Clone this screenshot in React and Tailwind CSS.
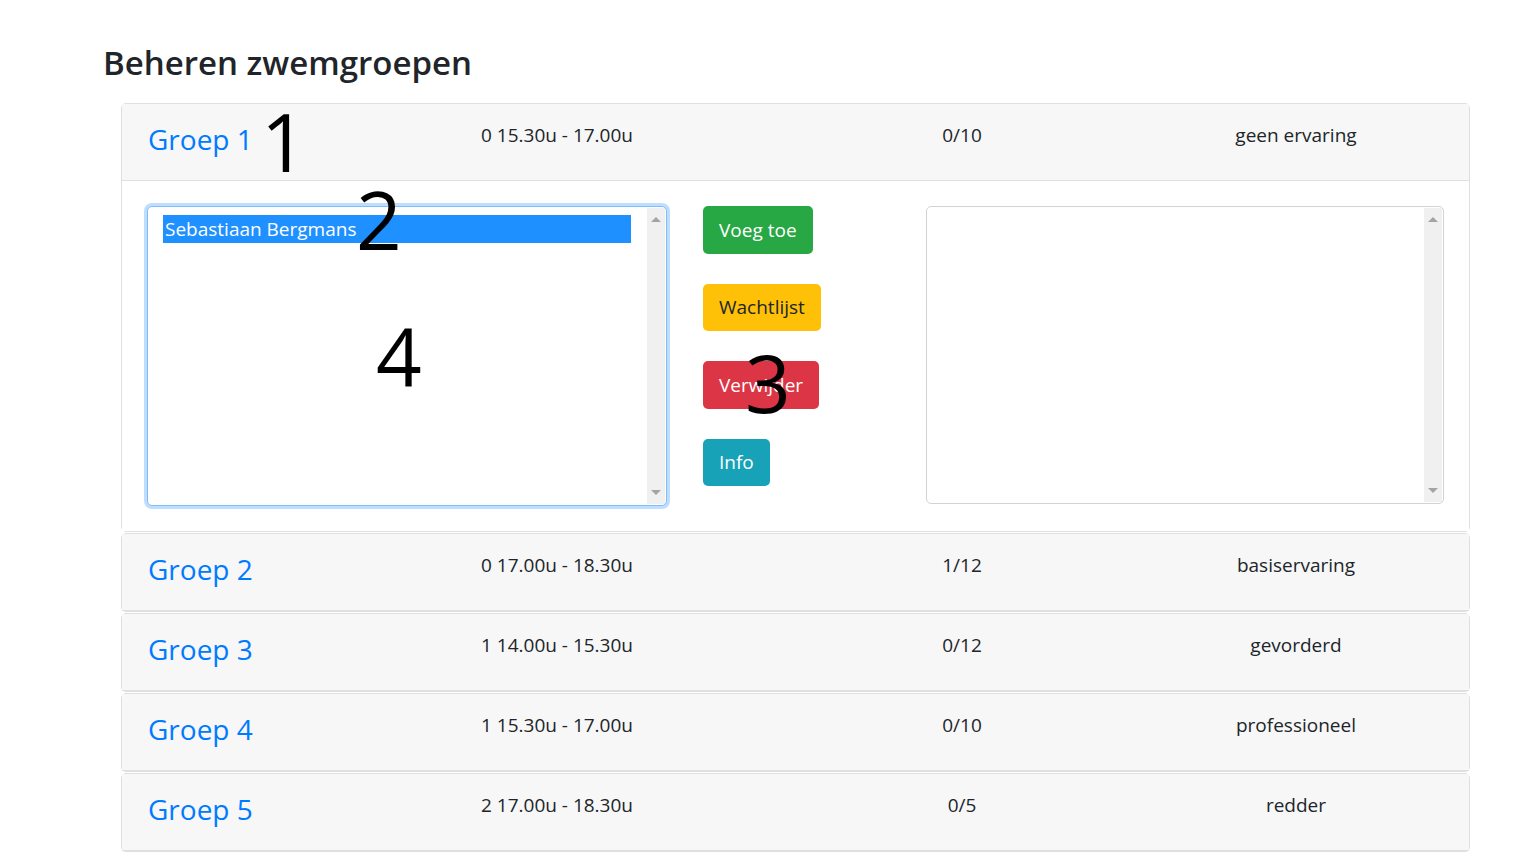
import React from "react";

const font = { fontFamily: '"Open Sans", "Noto Sans", "Liberation Sans", sans-serif' };

function Scrollbar() {
  return (
    <div className="flex w-[18px] shrink-0 flex-col items-center justify-between bg-[#f0f0f0] py-[9px]">
      <div className="h-0 w-0 border-x-[5px] border-b-[5px] border-x-transparent border-b-[#a3a3a3]" />
      <div className="h-0 w-0 border-x-[5px] border-t-[5px] border-x-transparent border-t-[#a3a3a3]" />
    </div>
  );
}

function Header({ name, time, count, level }) {
  return (
    <div className="flex h-[77px] items-start border-b border-[#dfdfdf] bg-[#f7f7f7] pl-[26px] pr-[6px] pt-[16px]">
      <div className="w-[333px] shrink-0 pt-[1px] text-[28px] leading-[36px] text-[#007bff]">{name}</div>
      <div className="w-[314px] shrink-0 text-[19px] leading-[30px] text-[#212529]">{time}</div>
      <div className="w-[334px] shrink-0 text-center text-[19px] leading-[30px] text-[#212529]">{count}</div>
      <div className="w-[334px] shrink-0 text-center text-[19px] leading-[30px] text-[#212529]">{level}</div>
    </div>
  );
}

const rows = [
  ["Groep 2", "0 17.00u - 18.30u", "1/12", "basiservaring"],
  ["Groep 3", "1 14.00u - 15.30u", "0/12", "gevorderd"],
  ["Groep 4", "1 15.30u - 17.00u", "0/10", "professioneel"],
  ["Groep 5", "2 17.00u - 18.30u", "0/5", "redder"],
];

export default function App() {
  return (
    <div className="relative min-h-[864px] bg-white" style={font}>
      <h2 className="pl-[103px] pt-[39px] pb-[16px] text-[33px] font-semibold leading-[48px] text-[#212529]">
        Beheren zwemgroepen
      </h2>
      <div className="ml-[121px] w-[1349px]">
        <div className="rounded-[5px] border border-[#dfdfdf]">
          <Header name="Groep 1" time="0 15.30u - 17.00u" count="0/10" level="geen ervaring" />
          <div className="flex items-start bg-white px-[25px] pt-[25px] pb-[25px]">
            <div className="flex h-[300px] w-[520px] shrink-0 rounded-[5px] border border-[#80bdff] bg-white shadow-[0_0_0_3px_rgba(0,123,255,0.25)]">
              <div className="flex-1 pl-[15px] pr-[16px] pt-[8px]">
                <div className="h-[28px] bg-[#1e90ff] pl-[2px] text-[19px] leading-[28px] text-white">
                  Sebastiaan Bergmans
                </div>
              </div>
              <div className="my-[1px] mr-[1px] flex">
                <Scrollbar />
              </div>
            </div>
            <div className="ml-[36px] flex w-[223px] shrink-0 flex-col items-start gap-[30px]">
              <button className="h-[48px] rounded-[5px] bg-[#28a745] px-[16px] text-[19px] text-white">Voeg toe</button>
              <button className="h-[47px] rounded-[5px] bg-[#ffc107] px-[16px] text-[19px] text-[#212529]">Wachtlijst</button>
              <button className="h-[48px] rounded-[5px] bg-[#dc3545] px-[16px] text-[19px] text-white">Verwijder</button>
              <button className="h-[47px] rounded-[5px] bg-[#17a2b8] px-[16px] text-[19px] text-white">Info</button>
            </div>
            <div className="flex h-[298px] w-[518px] shrink-0 rounded-[5px] border border-[#ced4da] bg-white">
              <div className="flex-1" />
              <div className="my-[1px] mr-[1px] flex">
                <Scrollbar />
              </div>
            </div>
          </div>
        </div>
        {rows.map((r) => (
          <div key={r[0]} className="mt-[1px] rounded-[5px] border border-[#dfdfdf]">
            <Header name={r[0]} time={r[1]} count={r[2]} level={r[3]} />
          </div>
        ))}
      </div>

      <span className="absolute left-[261px] top-[101px] text-[80px] leading-none text-black">1</span>
      <span className="absolute left-[356px] top-[179px] text-[80px] leading-none text-black">2</span>
      <span className="absolute left-[376px] top-[315px] text-[80px] leading-none text-black">4</span>
      <span className="absolute left-[745px] top-[342px] text-[80px] leading-none text-black">3</span>
    </div>
  );
}
